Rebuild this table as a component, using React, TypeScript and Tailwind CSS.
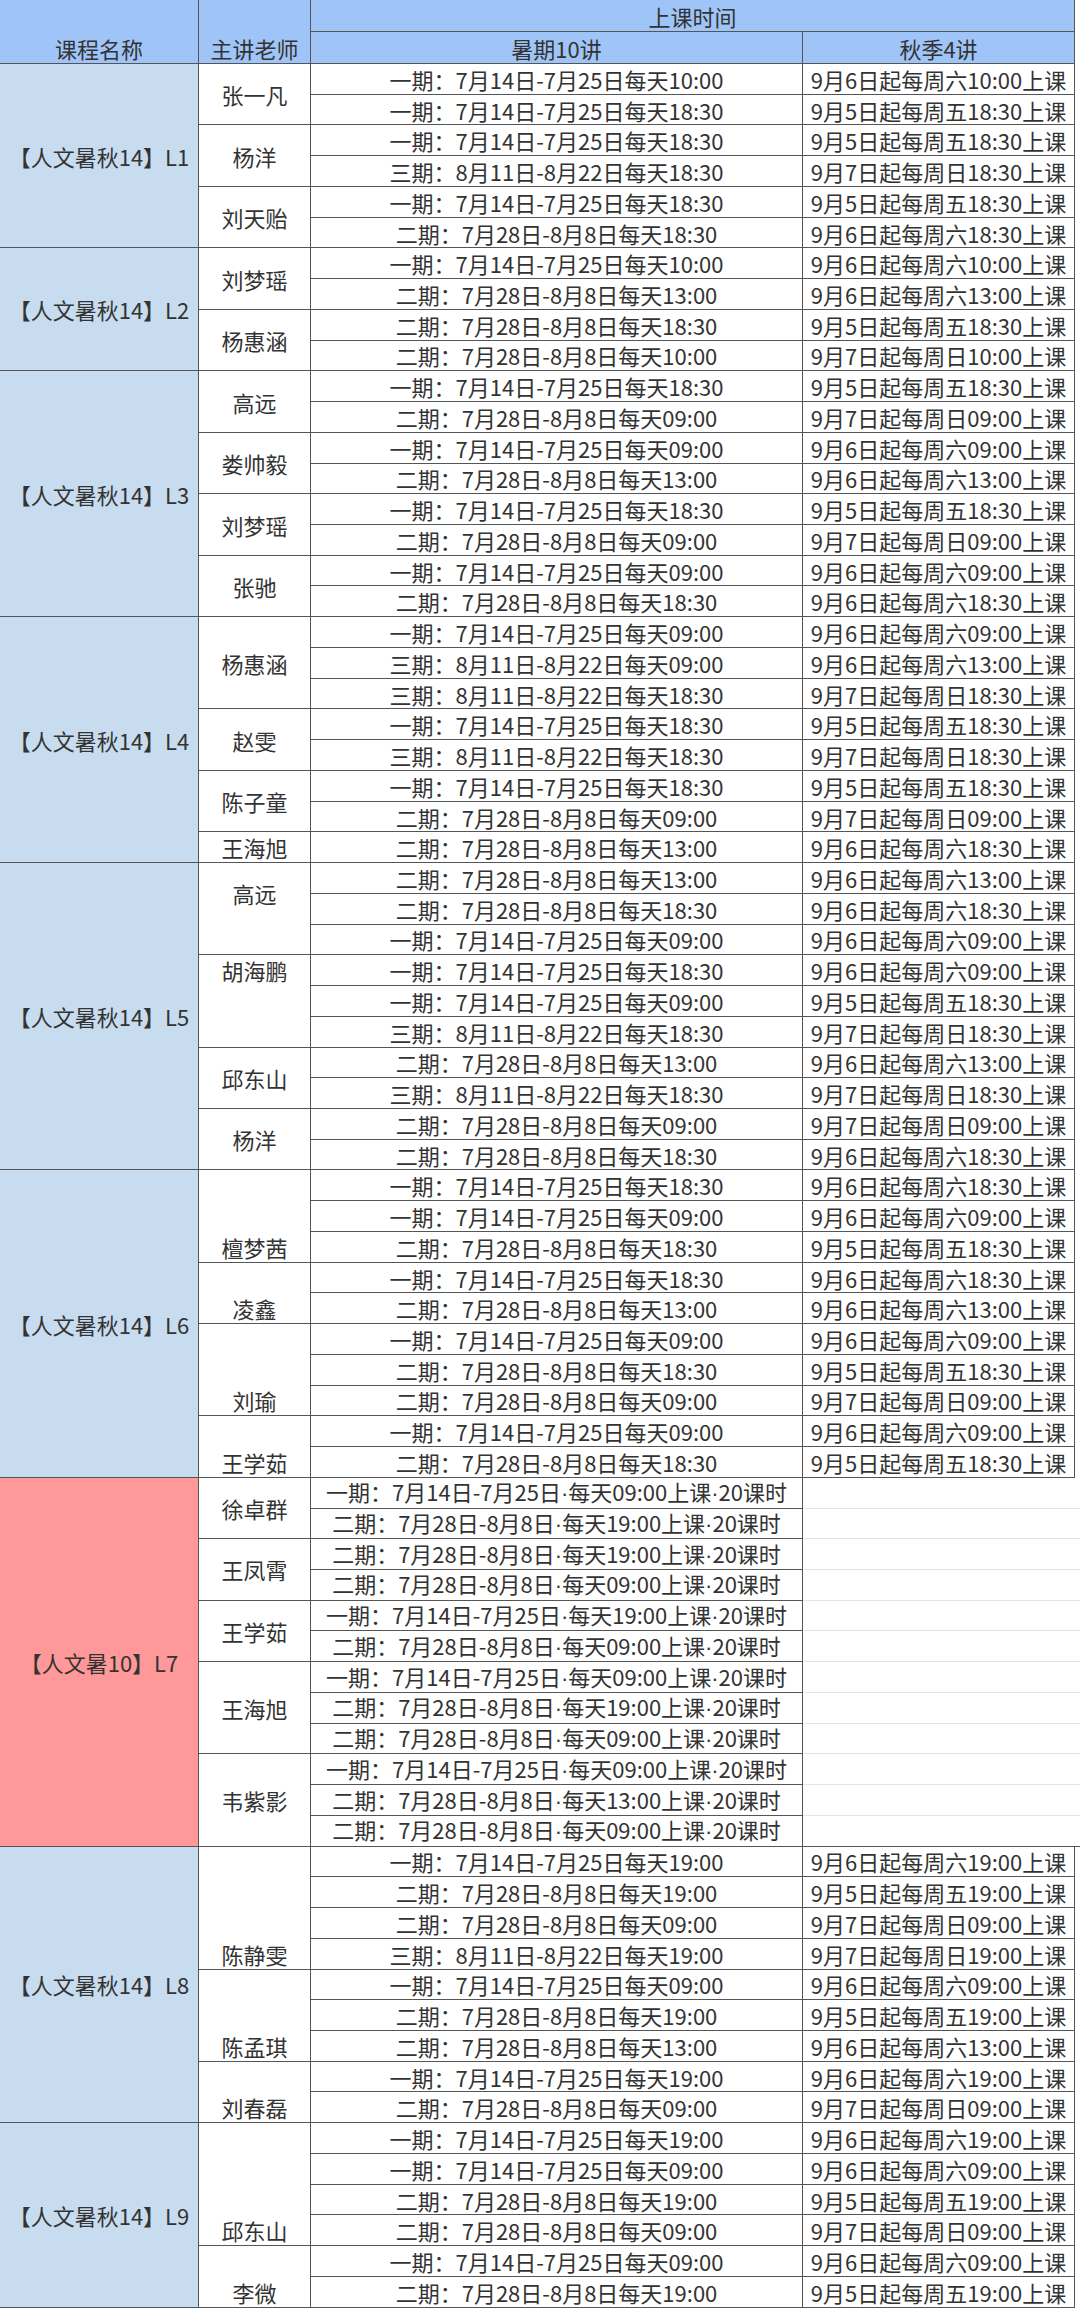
import React from "react"

type Teacher = { name: string; align?: "center" | "end"; shift?: string; rows: string[][] }
type Course = { name: string; pink?: boolean; teachers: Teacher[] }

const span: Record<number, string> = {
  1: "row-span-1",
  2: "row-span-2",
  3: "row-span-3",
  4: "row-span-4",
  6: "row-span-6",
  8: "row-span-8",
  9: "row-span-9",
  10: "row-span-10",
  12: "row-span-12",
}

const a = "一期：7月14日-7月25日每天"
const b = "二期：7月28日-8月8日每天"
const c = "三期：8月11日-8月22日每天"
const sat = (t: string) => `9月6日起每周六${t}上课`
const fri = (t: string) => `9月5日起每周五${t}上课`
const sun = (t: string) => `9月7日起每周日${t}上课`

const courses: Course[] = [
  {
    name: "【人文暑秋14】L1",
    teachers: [
      { name: "张一凡", rows: [[a + "10:00", sat("10:00")], [a + "18:30", fri("18:30")]] },
      { name: "杨洋", rows: [[a + "18:30", fri("18:30")], [c + "18:30", sun("18:30")]] },
      { name: "刘天贻", rows: [[a + "18:30", fri("18:30")], [b + "18:30", sat("18:30")]] },
    ],
  },
  {
    name: "【人文暑秋14】L2",
    teachers: [
      { name: "刘梦瑶", rows: [[a + "10:00", sat("10:00")], [b + "13:00", sat("13:00")]] },
      { name: "杨惠涵", rows: [[b + "18:30", fri("18:30")], [b + "10:00", sun("10:00")]] },
    ],
  },
  {
    name: "【人文暑秋14】L3",
    teachers: [
      { name: "高远", rows: [[a + "18:30", fri("18:30")], [b + "09:00", sun("09:00")]] },
      { name: "娄帅毅", rows: [[a + "09:00", sat("09:00")], [b + "13:00", sat("13:00")]] },
      { name: "刘梦瑶", rows: [[a + "18:30", fri("18:30")], [b + "09:00", sun("09:00")]] },
      { name: "张驰", rows: [[a + "09:00", sat("09:00")], [b + "18:30", sat("18:30")]] },
    ],
  },
  {
    name: "【人文暑秋14】L4",
    teachers: [
      {
        name: "杨惠涵",
        rows: [[a + "09:00", sat("09:00")], [c + "09:00", sat("13:00")], [c + "18:30", sun("18:30")]],
      },
      { name: "赵雯", rows: [[a + "18:30", fri("18:30")], [c + "18:30", sun("18:30")]] },
      { name: "陈子童", rows: [[a + "18:30", fri("18:30")], [b + "09:00", sun("09:00")]] },
      { name: "王海旭", rows: [[b + "13:00", sat("18:30")]] },
    ],
  },
  {
    name: "【人文暑秋14】L5",
    teachers: [
      {
        name: "高远",
        shift: "pb-[31px]",
        rows: [[b + "13:00", sat("13:00")], [b + "18:30", sat("18:30")], [a + "09:00", sat("09:00")]],
      },
      {
        name: "胡海鹏",
        shift: "pb-[62px]",
        rows: [[a + "18:30", sat("09:00")], [a + "09:00", fri("18:30")], [c + "18:30", sun("18:30")]],
      },
      { name: "邱东山", rows: [[b + "13:00", sat("13:00")], [c + "18:30", sun("18:30")]] },
      { name: "杨洋", rows: [[b + "09:00", sun("09:00")], [b + "18:30", sat("18:30")]] },
    ],
  },
  {
    name: "【人文暑秋14】L6",
    teachers: [
      {
        name: "檀梦茜",
        align: "end",
        rows: [[a + "18:30", sat("18:30")], [a + "09:00", sat("09:00")], [b + "18:30", fri("18:30")]],
      },
      { name: "凌鑫", align: "end", rows: [[a + "18:30", sat("18:30")], [b + "13:00", sat("13:00")]] },
      {
        name: "刘瑜",
        align: "end",
        rows: [[a + "09:00", sat("09:00")], [b + "18:30", fri("18:30")], [b + "09:00", sun("09:00")]],
      },
      { name: "王学茹", align: "end", rows: [[a + "09:00", sat("09:00")], [b + "18:30", fri("18:30")]] },
    ],
  },
  {
    name: "【人文暑10】L7",
    pink: true,
    teachers: [
      {
        name: "徐卓群",
        rows: [["一期：7月14日-7月25日·每天09:00上课·20课时"], ["二期：7月28日-8月8日·每天19:00上课·20课时"]],
      },
      {
        name: "王凤霄",
        rows: [["二期：7月28日-8月8日·每天19:00上课·20课时"], ["二期：7月28日-8月8日·每天09:00上课·20课时"]],
      },
      {
        name: "王学茹",
        rows: [["一期：7月14日-7月25日·每天19:00上课·20课时"], ["二期：7月28日-8月8日·每天09:00上课·20课时"]],
      },
      {
        name: "王海旭",
        rows: [
          ["一期：7月14日-7月25日·每天09:00上课·20课时"],
          ["二期：7月28日-8月8日·每天19:00上课·20课时"],
          ["二期：7月28日-8月8日·每天09:00上课·20课时"],
        ],
      },
      {
        name: "韦紫影",
        rows: [
          ["一期：7月14日-7月25日·每天09:00上课·20课时"],
          ["二期：7月28日-8月8日·每天13:00上课·20课时"],
          ["二期：7月28日-8月8日·每天09:00上课·20课时"],
        ],
      },
    ],
  },
  {
    name: "【人文暑秋14】L8",
    teachers: [
      {
        name: "陈静雯",
        align: "end",
        rows: [
          [a + "19:00", sat("19:00")],
          [b + "19:00", fri("19:00")],
          [b + "09:00", sun("09:00")],
          [c + "19:00", sun("19:00")],
        ],
      },
      {
        name: "陈孟琪",
        align: "end",
        rows: [[a + "09:00", sat("09:00")], [b + "19:00", fri("19:00")], [b + "13:00", sat("13:00")]],
      },
      { name: "刘春磊", align: "end", rows: [[a + "19:00", sat("19:00")], [b + "09:00", sun("09:00")]] },
    ],
  },
  {
    name: "【人文暑秋14】L9",
    teachers: [
      {
        name: "邱东山",
        align: "end",
        rows: [
          [a + "19:00", sat("19:00")],
          [a + "09:00", sat("09:00")],
          [b + "19:00", fri("19:00")],
          [b + "09:00", sun("09:00")],
        ],
      },
      { name: "李微", align: "end", rows: [[a + "09:00", sat("09:00")], [b + "19:00", fri("19:00")]] },
    ],
  },
]

const cell = "flex justify-center border-r border-b border-[#555] whitespace-nowrap leading-[30px]"

// the middle dot is narrow in the original, CJK fonts draw it full width
function Dotted({ text }: { text: string }) {
  const parts = text.split("·")
  return (
    <span>
      {parts.map((p, i) => (
        <React.Fragment key={i}>
          {i > 0 && <span className="font-['Liberation_Sans',sans-serif]">·</span>}
          {p}
        </React.Fragment>
      ))}
    </span>
  )
}

export default function App() {
  return (
    <div className="w-[1080px] min-h-[2308px] bg-white font-['Noto_Sans_CJK_SC',sans-serif] text-[22px] text-[#333]">
      <div className="grid w-[1075px] grid-cols-[199px_112px_492px_272px] grid-rows-[32px_32px_repeat(73,30.74px)]">
        <div className={`${cell} col-start-1 row-span-2 items-end bg-[#9fc5f8]`}>课程名称</div>
        <div className={`${cell} col-start-2 row-span-2 items-end bg-[#9fc5f8]`}>主讲老师</div>
        <div className={`${cell} col-start-3 col-span-2 items-center bg-[#9fc5f8]`}>上课时间</div>
        <div className={`${cell} col-start-3 items-center bg-[#9fc5f8]`}>暑期10讲</div>
        <div className={`${cell} col-start-4 items-center bg-[#9fc5f8]`}>秋季4讲</div>

        {courses.map((course, ci) => {
          const total = course.teachers.reduce((n, t) => n + t.rows.length, 0)
          return (
            <React.Fragment key={ci}>
              <div
                className={`${cell} col-start-1 items-center ${span[total]} ${
                  course.pink ? "bg-[#ff9999]" : "bg-[#c8dcf0]"
                }`}
              >
                {course.name}
              </div>
              {course.teachers.map((t, ti) => (
                <React.Fragment key={ti}>
                  <div
                    className={`${cell} col-start-2 ${span[t.rows.length]} ${
                      t.align === "end" ? "items-end" : "items-center"
                    } ${t.shift ?? ""}`}
                  >
                    {t.name}
                  </div>
                  {t.rows.map((r, ri) => {
                    const lastRow = ti === course.teachers.length - 1 && ri === t.rows.length - 1
                    return (
                      <React.Fragment key={ri}>
                        <div className={`${cell} col-start-3 items-center`}>
                          <Dotted text={r[0]} />
                        </div>
                        {r[1] ? (
                          <div className={`${cell} col-start-4 items-center`}>{r[1]}</div>
                        ) : (
                          <div
                            className={`col-start-4 -mr-[5px] border-b ${
                              lastRow ? "border-[#555]" : "border-[#e3e3e3]"
                            }`}
                          />
                        )}
                      </React.Fragment>
                    )
                  })}
                </React.Fragment>
              ))}
            </React.Fragment>
          )
        })}
      </div>
    </div>
  )
}
